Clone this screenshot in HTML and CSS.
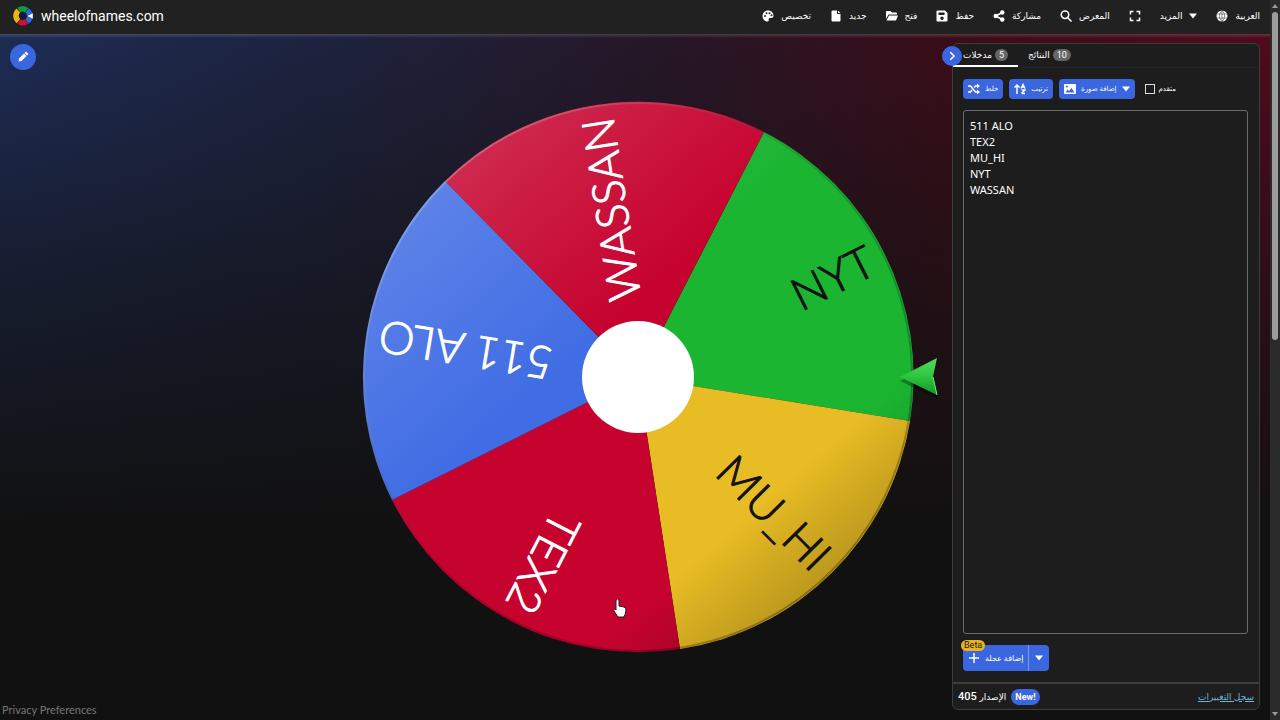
FILE: index.html
```html
<!DOCTYPE html>
<html lang="ar">
<head>
    <meta charset="UTF-8">
    <meta name="viewport" content="width=device-width, initial-scale=1.0">
    <title>wheelofnames.com</title>
    <link rel="stylesheet" href="styles.css">
</head>
<body>
    <div class="page">
        <header class="top-bar">
            <a href="#" class="brand">
                <svg class="logo" viewBox="0 0 24 24" aria-hidden="true">
                    <circle cx="12" cy="12" r="11.5" fill="#0b1c3c"/>
                    <g fill="none" stroke-width="6">
                        <path d="M7.500 5.500A7.500 7.500 0 0 1 16 5.700" stroke="#0f9d3a"/>
                        <path d="M7 17.500A7.500 7.500 0 0 1 7 6" stroke="#eeb211"/>
                        <path d="M16 18A7.500 7.500 0 0 1 7.500 18" stroke="#d50f25"/>
                        <path d="M16.500 6A7.500 7.500 0 0 1 16.500 18" stroke="#3369e8"/>
                    </g>
                    <path d="M16 12l7-3.500v7z" fill="#fff" stroke="#0b1c3c" stroke-width="0.5"/>
                </svg>
                <span>wheelofnames.com</span>
            </a>
            <nav class="menu">
                <button class="menu-item"><svg class="icon" viewBox="0 0 24 24"><path d="M12 1C5.500 1 1 6 1 12s4.500 11 10 11c2 0 3-1.500 2.500-3-.8-2.200.3-4 2.500-4h3c2.500 0 4-2 4-4.500C23 5.500 18 1 12 1zM6 14a2 2 0 1 1 0-4 2 2 0 0 1 0 4zm3-5.500a2 2 0 1 1 0-4 2 2 0 0 1 0 4zm6 0a2 2 0 1 1 0-4 2 2 0 0 1 0 4zm4 4a2 2 0 1 1 0-4 2 2 0 0 1 0 4z"/></svg><span>تخصيص</span></button>
                <button class="menu-item"><svg class="icon" viewBox="0 0 24 24"><path d="M5 1h9v7h7v13a2 2 0 0 1-2 2H5a2 2 0 0 1-2-2V3a2 2 0 0 1 2-2zm11 0l5 5h-5z"/></svg><span>جديد</span></button>
                <button class="menu-item"><svg class="icon" viewBox="0 0 24 24"><path d="M0 4a2 2 0 0 1 2-2h7l3 3h8a2 2 0 0 1 2 2v2H5L0 18zM6 11h18l-4 10H1z"/></svg><span>فتح</span></button>
                <button class="menu-item"><svg class="icon" viewBox="0 0 24 24"><path fill-rule="evenodd" d="M3 1h15l5 5v15a2 2 0 0 1-2 2H3a2 2 0 0 1-2-2V3a2 2 0 0 1 2-2zm2 4v5h12V5zm7 8a3.500 3.500 0 1 0 0 7 3.500 3.500 0 0 0 0-7z"/></svg><span>حفظ</span></button>
                <button class="menu-item"><svg class="icon" viewBox="0 0 24 24"><path d="M18 5L6 12l12 7" fill="none" stroke="#fff" stroke-width="3"/><circle cx="18.500" cy="5" r="4.500"/><circle cx="5.500" cy="12" r="4.500"/><circle cx="18.500" cy="19" r="4.500"/></svg><span>مشاركة</span></button>
                <button class="menu-item"><svg class="icon" viewBox="0 0 24 24"><path d="M15 15l8 8M10 2a7.500 7.500 0 1 1 0 15 7.500 7.500 0 0 1 0-15z" fill="none" stroke="#fff" stroke-width="3"/></svg><span>المعرض</span></button>
                <button class="menu-item" aria-label="ملء الشاشة"><svg class="icon" viewBox="0 0 24 24"><path d="M3 9V3h6M15 3h6v6M21 15v6h-6M9 21H3v-6" fill="none" stroke="#fff" stroke-width="3"/></svg></button>
                <button class="menu-item"><span>المزيد</span><svg class="icon caret" viewBox="0 0 10 10"><path d="M0 2h10L5 8z"/></svg></button>
                <button class="menu-item"><svg class="icon" viewBox="0 0 24 24"><circle cx="12" cy="12" r="11"/><path d="M1 8h22M1 16h22M12 1v22M12 1c-7 7-7 15 0 22M12 1c7 7 7 15 0 22" fill="none" stroke="#212121"/></svg><span>العربية</span></button>
            </nav>
        </header>

        <main class="stage">
            <div class="side">
                <button class="round-button" aria-label="تعديل"><svg class="icon" viewBox="0 0 24 24"><path d="M3 21l1-6L14 5l5 5L9 20zM15 4l2-2q1-1 2 0l3 3q1 1 0 2l-2 2z"/></svg></button>
                <a href="#" class="privacy" lang="en">Privacy Preferences</a>
            </div>

            <svg class="wheel" viewBox="0 0 600 576" role="img" aria-label="Wheel">
                <defs>
                    <linearGradient id="shade" x1="0.150" y1="0.100" x2="0.850" y2="0.900">
                        <stop offset="0" stop-color="#fff" stop-opacity="0.160"/>
                        <stop offset="0.400" stop-color="#fff" stop-opacity="0"/>
                        <stop offset="0.800" stop-color="#000" stop-opacity="0"/>
                        <stop offset="1" stop-color="#000" stop-opacity="0.220"/>
                    </linearGradient>
                    <linearGradient id="rim" x1="0.100" y1="0.100" x2="0.900" y2="0.900">
                        <stop offset="0" stop-color="#fff" stop-opacity="0.300"/>
                        <stop offset="0.500" stop-color="#000" stop-opacity="0.150"/>
                        <stop offset="1" stop-color="#000" stop-opacity="0.300"/>
                    </linearGradient>
                    <linearGradient id="pointer" x1="0" y1="0" x2="0" y2="1">
                        <stop offset="0" stop-color="#4fdc5a"/>
                        <stop offset="0.500" stop-color="#2fc63f"/>
                        <stop offset="1" stop-color="#129526"/>
                    </linearGradient>
                </defs>
                <g transform="translate(296 288)">
                    <path d="M0 0L126 -245A275 275 0 0 1 272 44Z" fill="#1bb532"/>
                    <path d="M0 0L272 44A275 275 0 0 1 42 272Z" fill="#e8bc24"/>
                    <path d="M0 0L42 272A275 275 0 0 1 -246 123Z" fill="#c6032f"/>
                    <path d="M0 0L-246 123A275 275 0 0 1 -193 -196Z" fill="#416de4"/>
                    <path d="M0 0L-193 -196A275 275 0 0 1 126 -245Z" fill="#c6032f"/>
                    <circle r="275" fill="url(#shade)"/>
                    <circle r="274" fill="none" stroke="url(#rim)" stroke-width="2"/>
                    <g class="wheel-names">
                        <text x="262" y="15" transform="rotate(-26.700)" class="dark">NYT</text>
                        <text x="262" y="15" transform="rotate(45.300)" class="dark">MU_HI</text>
                        <text x="262" y="15" transform="rotate(117.300)">TEX2</text>
                        <text x="262" y="15" transform="rotate(189.300)">511 ALO</text>
                        <text x="262" y="15" transform="rotate(261.300)">WASSAN</text>
                    </g>
                    <circle r="56" fill="#fff"/>
                    <path d="M262 4L299 -15L296 4L300 22Z" fill="#000" opacity="0.300"/>
                    <path d="M262 0L299 -19L295 0L299 18Z" fill="url(#pointer)"/>
                    <path d="M295 0L299 18" fill="none" stroke="#6cf07c"/>
                    <path d="M-22 224q0-2 1.500-2t1.500 2v5l5 1q2 1 2 3l-1 5-1 1v1h-6l-4-6q-1-2 1-2l1 1z" fill="#fff" stroke="#222"/>
                </g>
            </svg>

            <section class="panel">
                <button class="round-button collapse" aria-label="إخفاء"><svg class="icon" viewBox="0 0 24 24"><path d="M8 3l9 9-9 9" fill="none" stroke="#fff" stroke-width="4"/></svg></button>
                <div class="tabs">
                    <button class="tab active"><span>مدخلات</span><span class="count">5</span></button>
                    <button class="tab"><span>النتائج</span><span class="count">10</span></button>
                </div>
                <div class="panel-body">
                    <div class="tools">
                        <button class="blue-button"><svg class="icon" viewBox="0 0 24 24"><path d="M0 6h5l10 12h5M0 18h5l3-4M12 9l3-3h5" fill="none" stroke="#fff" stroke-width="3"/><path d="M18 1l6 5-6 5zM18 13l6 5-6 5z"/></svg><span>خلط</span></button>
                        <button class="blue-button"><svg class="icon" viewBox="0 0 24 24"><path d="M6 22V4M1 9l5-5 5 5M15 21h7M15 14h7l-7 7M14 11l4-8 4 8M15 8h6" fill="none" stroke="#fff" stroke-width="3"/></svg><span>ترتيب</span></button>
                        <button class="blue-button"><svg class="icon" viewBox="0 0 24 24"><path fill-rule="evenodd" d="M2 2h20a2 2 0 0 1 2 2v16a2 2 0 0 1-2 2H2a2 2 0 0 1-2-2V4a2 2 0 0 1 2-2zm1 17h18l-6-9-5 6-3-3zM6 5a2 2 0 1 0 0 4 2 2 0 0 0 0-4z"/></svg><span>إضافة صورة</span><svg class="icon caret" viewBox="0 0 10 10"><path d="M0 2h10L5 8z"/></svg></button>
                        <label class="advanced"><input type="checkbox"><span>متقدم</span></label>
                    </div>
                    <textarea class="entries" aria-label="مدخلات" dir="ltr" spellcheck="false">511 ALO
TEX2
MU_HI
NYT
WASSAN</textarea>
                    <div class="add-wheel">
                        <button class="blue-button add"><svg class="icon" viewBox="0 0 24 24"><path d="M12 2v20M2 12h20" fill="none" stroke="#fff" stroke-width="3"/></svg><span>إضافة عجلة</span></button>
                        <button class="blue-button more" aria-label="المزيد"><svg class="icon caret" viewBox="0 0 10 10"><path d="M0 2h10L5 8z"/></svg></button>
                        <span class="beta">Beta</span>
                    </div>
                </div>
                <footer class="panel-footer">
                    <span class="version" dir="rtl"><small>الإصدار</small> 405</span>
                    <span class="new">New!</span>
                    <a href="#" class="changelog">سجل التغييرات</a>
                </footer>
            </section>
        </main>
    </div>
    <div class="scrollbar" aria-hidden="true">
        <span class="arrow-up"></span>
        <span class="thumb"></span>
        <span class="arrow-down"></span>
    </div>
</body>
</html>
```
FILE: styles.css
```css
* {
    box-sizing: border-box;
}
body {
    margin: 0;
    height: 100vh;
    overflow: hidden;
    display: flex;
    background-color: #111;
    color: #fff;
    font-family: Roboto, "DejaVu Sans", sans-serif;
    font-size: 9px;
}
button {
    border: 0;
    padding: 0;
    background: none;
    color: inherit;
    font: inherit;
    cursor: pointer;
}
.page {
    flex: 1;
    min-width: 0;
    display: flex;
    flex-direction: column;
}
.icon {
    width: 12px;
    height: 12px;
    fill: #fff;
    flex: none;
}
.icon.caret {
    width: 8px;
    height: 8px;
}

/* Header */
.top-bar {
    height: 34px;
    flex: none;
    display: flex;
    align-items: center;
    justify-content: space-between;
    padding: 0 10px 2px 12px;
    background-color: #212121;
}
.brand {
    display: flex;
    align-items: center;
    gap: 7px;
    color: #fff;
    font-size: 14px;
    text-decoration: none;
}
.logo {
    width: 22px;
    height: 22px;
}
.menu {
    display: flex;
    gap: 19px;
}
.menu-item {
    display: flex;
    align-items: center;
    gap: 7px;
}

/* Wheel area */
.stage {
    flex: 1;
    min-height: 0;
    display: flex;
    align-items: center;
    gap: 10px;
    padding: 0 10px 0 0;
    background: linear-gradient(to bottom, rgba(255, 255, 255, 0.16) 0, rgba(255, 255, 255, 0) 4px),
        linear-gradient(to bottom, rgba(17, 17, 17, 0) 0%, rgba(17, 17, 17, 0.55) 35%, #111 72%),
        linear-gradient(to right, #1e2c55 0%, #1d233f 25%, #261727 52%, #3b0d19 76%, #500a1e 100%);
}
.side {
    flex: 1;
    align-self: stretch;
    display: flex;
    flex-direction: column;
    justify-content: space-between;
    align-items: flex-start;
    padding: 10px 0 4px 2px;
}
.round-button {
    width: 26px;
    height: 26px;
    margin-left: 8px;
    display: flex;
    align-items: center;
    justify-content: center;
    border-radius: 50%;
    background-color: #3a66e0;
}
.privacy {
    color: #777;
    font-family: Lato, sans-serif;
    font-size: 11px;
    text-decoration: none;
}
.wheel {
    height: 80vh;
    flex: none;
}
.wheel-names text {
    font-family: Lato, sans-serif;
    font-size: 45px;
    font-weight: 300;
    text-anchor: end;
    fill: #fff;
    stroke: #fff;
    stroke-width: 1px;
}
.wheel-names .dark {
    fill: #111;
    stroke: #111;
}

/* Entries panel */
.panel {
    position: relative;
    align-self: stretch;
    flex: 0 0 308px;
    margin: 9px 0 10px;
    display: flex;
    flex-direction: column;
    border: 1px solid #3c3c3c;
    border-radius: 6px;
    background-color: #1d1d1d;
}
.collapse {
    position: absolute;
    top: 2px;
    left: -11px;
    width: 20px;
    height: 20px;
    margin: 0;
}
.collapse .icon {
    width: 10px;
    height: 10px;
}
.tabs {
    display: flex;
    height: 24px;
    flex: none;
    border-bottom: 1px solid #232323;
}
.tab {
    display: flex;
    align-items: center;
    gap: 3px;
    padding: 0 10px;
    border-bottom: 2px solid transparent;
}
.tab.active {
    border-bottom-color: #fff;
}
.count {
    padding: 0 4px;
    border-radius: 6px;
    background-color: #666;
    line-height: 12px;
}
.panel-body {
    flex: 1;
    min-height: 0;
    display: flex;
    flex-direction: column;
    gap: 11px;
    padding: 11px 11px 11px 10px;
}
.tools {
    display: flex;
    gap: 6px;
    font-size: 7px;
    font-weight: 500;
}
.blue-button {
    height: 20px;
    display: flex;
    align-items: center;
    gap: 5px;
    padding: 0 5px;
    border-radius: 4px;
    background-color: #3a66e0;
}
.advanced {
    display: flex;
    align-items: center;
    gap: 4px;
    margin-left: 4px;
}
.advanced input {
    appearance: none;
    width: 10px;
    height: 10px;
    margin: 0;
    border: 1px solid #ddd;
}
.entries {
    flex: 1;
    width: 100%;
    padding: 7px 6px;
    border: 1px solid #6b6b6b;
    border-radius: 3px;
    background: none;
    color: #fff;
    font-family: "Noto Sans", sans-serif;
    font-size: 11px;
    line-height: 16px;
    resize: none;
}
.add-wheel {
    position: relative;
    display: flex;
    font-size: 8px;
}
.add-wheel .blue-button {
    height: 26px;
}
.add-wheel .add {
    border-radius: 4px 0 0 4px;
}
.add-wheel .more {
    padding: 0 6px;
    border-left: 1px solid #7d9aee;
    border-radius: 0 4px 4px 0;
}
.beta {
    position: absolute;
    top: -5px;
    left: -2px;
    padding: 0 3px;
    border-radius: 6px;
    background-color: #e8b320;
    color: #1d1d1d;
    font-size: 9px;
    line-height: 11px;
}
.panel-footer {
    display: flex;
    align-items: center;
    gap: 5px;
    height: 27px;
    flex: none;
    padding: 0 5px;
    border-top: 2px solid #3c3c3c;
    font-weight: 500;
}
.version {
    font-size: 11px;
}
.version small {
    font-size: 9px;
}
.new {
    padding: 0 4px;
    border-radius: 8px;
    background-color: #3a66e0;
    font-size: 9px;
    font-weight: 700;
    line-height: 16px;
}
.changelog {
    margin-left: auto;
    color: #6fb4d8;
    font-weight: 400;
}

/* Window scrollbar */
.scrollbar {
    width: 10px;
    flex: none;
    display: flex;
    flex-direction: column;
    align-items: center;
    padding: 4px 0;
    gap: 4px;
    background-color: #2b2b2b;
}
.thumb {
    width: 6px;
    height: 46%;
    border-radius: 3px;
    background-color: #9c9c9c;
}
.arrow-up,
.arrow-down {
    border: 3px solid transparent;
}
.arrow-up {
    border-top: 0;
    border-bottom: 4px solid #9c9c9c;
}
.arrow-down {
    margin-top: auto;
    border-bottom: 0;
    border-top: 4px solid #9c9c9c;
}
```
